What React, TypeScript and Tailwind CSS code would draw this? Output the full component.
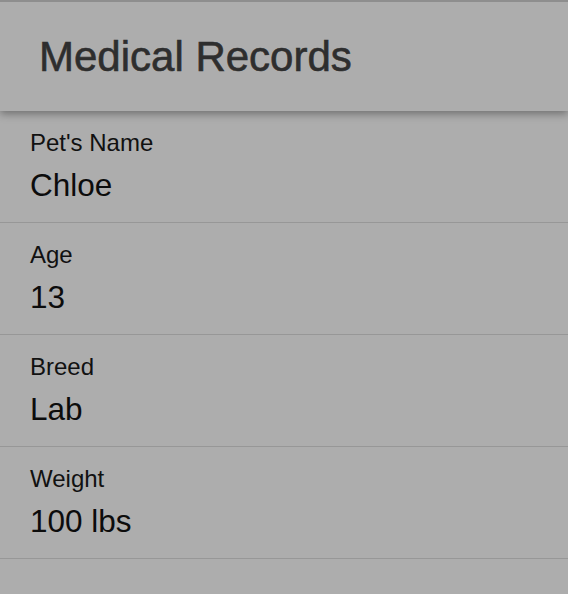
const records = [
  { label: "Pet's Name", value: "Chloe" },
  { label: "Age", value: "13" },
  { label: "Breed", value: "Lab" },
  { label: "Weight", value: "100 lbs" },
];

export default function App() {
  return (
    <div className="min-h-[594px] w-full bg-[#adadad] font-['Liberation_Sans',Arial,sans-serif]">
      <header className="relative z-10 h-[111px] border-t-2 border-[#8e8e8e] bg-[#adadad] pl-[39px] pt-[30px] shadow-[0_3px_8px_rgba(0,0,0,0.35)]">
        <h1 className="text-[42px] leading-[50px] font-medium text-[#2e2e2e] [-webkit-text-stroke:0.6px_#2e2e2e]">
          Medical Records
        </h1>
      </header>

      <div className="flex flex-col">
        {records.map((r) => (
          <div
            key={r.label}
            className="flex flex-col border-b border-[#979797] pl-[30px] pt-[18px] pb-[19px]"
          >
            <span className="text-[24px] leading-[28px] text-[#111]">{r.label}</span>
            <span className="mt-[10px] text-[31.5px] leading-[36px] text-[#0c0c0c]">{r.value}</span>
          </div>
        ))}
      </div>
    </div>
  );
}
